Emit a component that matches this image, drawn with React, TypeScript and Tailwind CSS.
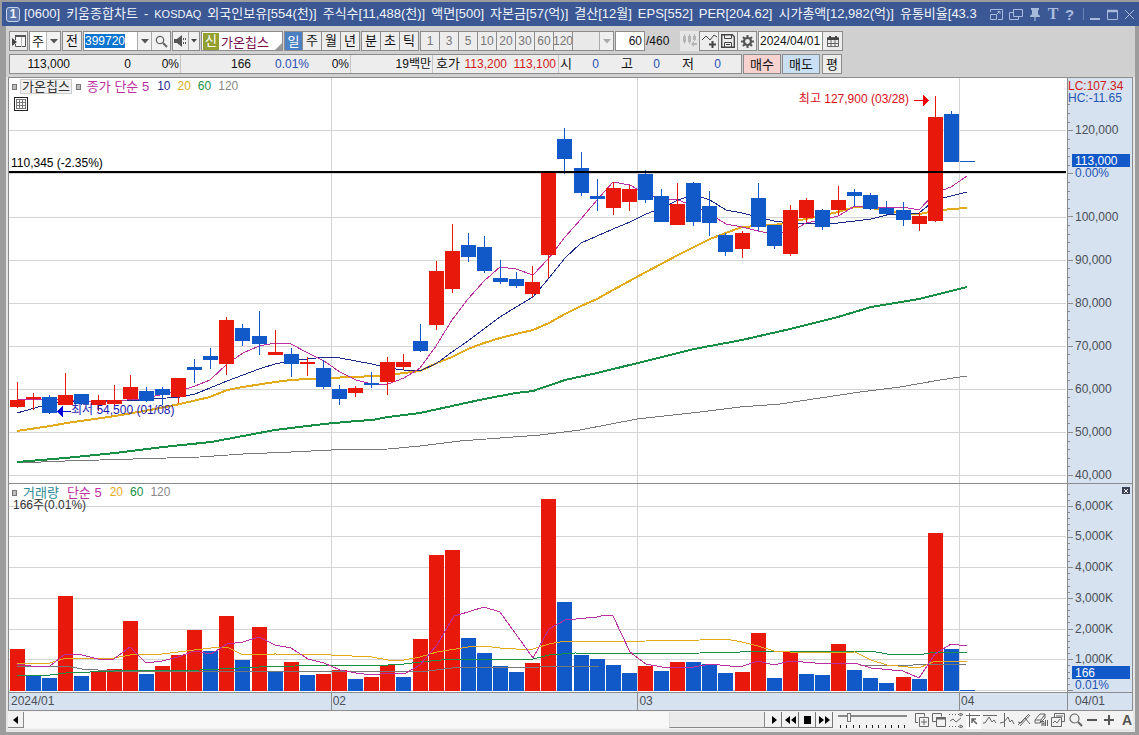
import React from 'react';

const RED = '#e8190a';
const BLUE = '#1158c8';

const titleParts = ['[0600]', '키움종합차트', '-', 'KOSDAQ', '외국인보유[554(천)]', '주식수[11,488(천)]', '액면[500]', '자본금[57(억)]', '결산[12월]', 'EPS[552]', 'PER[204.62]', '시가총액[12,982(억)]', '유통비율[43.3'];

// [color, body top, body bottom, high, low]
type Candle = [string, number, number, number, number];
const R = RED;
const B = BLUE;
const candles: Candle[] = [
  [R, 400, 407, 382, 408], [R, 397, 399, 393, 410], [B, 397, 413, 395, 414], [R, 395, 405, 373, 405],
  [B, 394, 404, 394, 405], [R, 400, 405, 395, 411], [R, 400, 404, 385, 406], [R, 387, 399, 375, 400],
  [B, 391, 401, 387, 402], [B, 389, 395, 387, 405], [R, 378, 397, 378, 403], [B, 367, 370, 359, 383],
  [B, 356, 360, 348, 369], [R, 320, 364, 317, 375], [B, 328, 341, 324, 346], [B, 336, 344, 311, 355],
  [R, 352, 355, 330, 355], [B, 354, 364, 348, 377], [R, 362, 364, 357, 376], [B, 368, 387, 360, 389],
  [B, 389, 399, 385, 405], [R, 388, 393, 386, 397], [B, 383, 385, 372, 388], [R, 362, 382, 357, 395],
  [R, 362, 367, 354, 370], [B, 341, 351, 324, 352], [R, 271, 325, 261, 330], [R, 251, 289, 224, 293],
  [B, 245, 257, 233, 262], [B, 247, 271, 236, 273], [B, 278, 282, 260, 284], [B, 279, 286, 272, 288],
  [R, 282, 294, 266, 297], [R, 172, 255, 172, 278], [B, 139, 159, 128, 174], [B, 168, 193, 152, 196],
  [B, 196, 199, 179, 211], [R, 188, 208, 182, 215], [R, 189, 202, 185, 211], [B, 174, 200, 170, 203],
  [B, 196, 222, 189, 222], [R, 204, 225, 183, 225], [B, 183, 222, 182, 226], [B, 206, 223, 191, 236],
  [B, 235, 252, 233, 256], [R, 233, 249, 231, 258], [B, 198, 227, 183, 231], [B, 225, 246, 225, 249],
  [R, 210, 254, 205, 256], [R, 200, 218, 198, 222], [B, 210, 227, 209, 230], [R, 200, 210, 186, 215],
  [B, 192, 196, 189, 206], [B, 195, 209, 193, 210], [B, 208, 214, 201, 215], [B, 210, 220, 202, 226],
  [R, 216, 224, 212, 231], [R, 117, 221, 96, 222], [B, 114, 162, 111, 162], [B, 161, 162, 161, 162],
];

const volumes: [string, number][] = [
  [R, 649], [B, 676], [B, 678], [R, 596], [B, 676], [R, 672], [R, 669], [R, 621], [B, 674], [R, 666],
  [R, 655], [R, 630], [B, 651], [R, 616], [B, 660], [R, 627], [B, 671], [R, 662], [B, 675], [R, 674],
  [R, 670], [B, 679], [R, 677], [R, 665], [B, 677], [R, 639], [R, 555], [R, 550], [B, 638], [B, 653],
  [B, 666], [B, 672], [R, 663], [R, 499], [B, 602], [B, 655], [B, 659], [B, 665], [B, 673], [R, 666],
  [B, 671], [R, 662], [B, 662], [B, 664], [B, 673], [R, 672], [R, 633], [B, 678], [R, 652], [B, 674],
  [B, 675], [R, 644], [B, 670], [B, 678], [B, 683], [R, 677], [B, 679], [R, 533], [B, 649], [B, 690],
];

const barX = (i: number) => Math.round(10 + i * 16.1);

const priceLines = [
  { color: '#777777', width: 1, points: '17,463 65,461 100,460 200,457 243,454 291,452 331,450 388,449 420,446 460,441 500,438 540,435 580,430 637,419 700,412 740,407 780,404 820,398 860,392 900,387 940,380 967,376' },
  { color: '#178f45', width: 2, points: '17,462 65,458 115,453 163,447 211,442 243,436 275,430 291,428 324,424 356,421 372,420 388,417 420,413 452,406 484,399 516,393 533,391 565,380 597,373 646,361 694,349 742,340 790,329 838,317 871,307 919,299 967,287' },
  { color: '#e3aa1c', width: 2, points: '17,431 50,426 67,423 115,416 150,410 180,404 210,397 227,390 243,387 275,382 291,380 324,378 356,377 388,375 404,373 420,371 437,363 452,357 468,349 484,343 500,338 516,334 533,330 549,323 565,314 581,306 597,299 613,290 646,272 678,255 710,239 742,227 774,225 806,219 838,212 855,207 871,208 887,211 903,213 919,214 935,211 951,209 967,208' },
  { color: '#1a2a8c', width: 1, points: '17,413 42,406 60,402 100,401 140,400 180,397 195,394 210,388 227,381 243,375 259,369 275,364 291,361 308,359 324,357 340,358 356,361 372,364 388,368 404,370 420,371 437,363 452,352 468,341 484,329 500,317 516,307 533,297 549,278 565,258 581,243 597,236 613,229 630,222 646,214 662,208 678,200 694,195 710,200 726,210 742,213 758,217 774,221 790,223 822,223 838,223 855,221 871,219 887,215 903,214 919,213 935,200 951,196 967,192' },
  { color: '#bb2fa0', width: 1, points: '17,399 42,399 58,400 100,402 140,399 180,391 195,386 210,380 227,364 243,353 259,346 275,343 291,344 308,353 324,361 340,372 356,380 372,384 388,384 404,378 420,368 436,346 452,320 468,299 484,281 500,267 516,269 533,275 549,258 565,237 581,219 597,200 613,182 630,185 646,194 662,199 678,200 694,206 710,214 726,224 742,227 758,231 774,234 790,232 806,223 822,220 838,216 855,206 871,207 903,207 919,210 935,193 951,187 967,176' },
];

const volumeLines = [
  { color: '#777777', points: '17,666 66,666 82,669 114,671 340,671 420,672 452,668 540,667 600,666 860,666 967,664' },
  { color: '#178f45', points: '17,675 50,675 66,673 114,671 200,670 259,667 331,665 388,665 404,664 420,662 452,659 533,659 549,655 575,653 620,654 700,653 780,651 871,651 887,654 919,655 935,652 967,652' },
  { color: '#e3aa1c', points: '17,663 50,663 66,658 114,658 130,655 162,654 178,652 211,648 227,647 243,655 275,654 331,655 372,657 388,660 404,660 420,657 437,652 468,647 484,646 500,648 516,649 533,649 549,644 565,641 590,642 646,641 700,640 726,639 742,642 758,646 774,651 790,652 815,653 855,652 871,660 887,665 919,668 935,661 967,661' },
  { color: '#bb2fa0', points: '17,664 31,666 50,666 65,654 82,655 98,659 114,659 130,647 146,663 162,661 178,657 194,651 211,654 227,644 243,642 259,637 275,645 291,648 308,659 324,663 340,670 356,673 372,675 388,673 404,674 420,665 437,645 454,616 468,612 484,607 500,612 533,658 549,629 565,620 597,617 605,615 613,616 630,652 646,664 662,667 694,667 710,664 740,667 758,661 774,665 790,661 815,663 838,664 855,663 871,668 903,671 919,678 935,654 951,644 967,646' },
];

const priceLabels: [number, string][] = [[130, '120,000'], [217, '100,000'], [260, '90,000'], [303, '80,000'], [346, '70,000'], [389, '60,000'], [432, '50,000'], [475, '40,000']];
const volumeLabels: [number, string][] = [[506, '6,000K'], [536, '5,000K'], [567, '4,000K'], [598, '3,000K'], [629, '2,000K'], [659, '1,000K']];

const btn = 'flex items-center justify-center border border-[#8c8c8c] bg-[#ededed] h-5';

const Caret = ({ color = '#555' }: { color?: string }) => (
  <svg width="8" height="5" viewBox="0 0 8 5" className="pointer-events-none shrink-0"><path d="M0 0h8L4 4.5z" fill={color} /></svg>
);

const TitleBar = () => (
  <header className="ml-[2px] flex h-6 items-center bg-[#3b5894] pl-1 text-[13px] text-[#f0f4fb]">
    <span className="mr-1 flex h-[15px] w-[14px] items-center justify-center rounded-[3px] border border-[#c8d4ea] bg-[#5a76ac] text-[12px] font-bold leading-none">1</span>
    <h1 className="flex min-w-0 flex-1 items-baseline gap-[6px] overflow-hidden whitespace-nowrap">
      {titleParts.map((part) => (
        <span key={part} className={part === 'KOSDAQ' ? 'text-[11px]' : ''}>{part}</span>
      ))}
    </h1>
    <div className="flex items-center gap-[6px] pr-1 text-[#a9bbdc]">
      <button aria-label="화면 분할"><svg width="13" height="13" viewBox="0 0 13 13" fill="none" stroke="currentColor"><path d="M.5 4V1.500h12v10H8" /><path d="M.5 6.500h6v5h-6z" /><path d="M7 6l3-3M7.500 3.500h2.500v2.500" /></svg></button>
      <button aria-label="새 창"><svg width="14" height="13" viewBox="0 0 14 13" fill="none" stroke="currentColor"><path d="M4.500 1.500h9v7h-9z" /><path d="M4 4.500H.5v7h9V9" /></svg></button>
      <button aria-label="고정"><svg width="12" height="13" viewBox="0 0 12 13" fill="currentColor"><path d="M2 0h8v2H9v4l2 2v1H6.600v4H5.400V9H1V8l2-2V2H2z" /></svg></button>
      <button className="w-3 font-[Liberation_Serif,serif] text-[16px] font-bold leading-none">T</button>
      <button className="w-2 text-[15px] font-bold leading-none">?</button>
      <span className="ml-1 h-3 w-px bg-[#6b84b4]" />
      <button aria-label="최소화"><svg width="11" height="13" viewBox="0 0 11 13"><path d="M0 10h10v2H0z" fill="currentColor" /></svg></button>
      <button aria-label="최대화"><svg width="11" height="11" viewBox="0 0 11 11" fill="none" stroke="currentColor"><path d="M.5 1.500h10v9H.5z" /><path d="M0 2h11" strokeWidth="2.500" /></svg></button>
      <button aria-label="닫기"><svg width="11" height="11" viewBox="0 0 11 11" stroke="currentColor"><path d="M1 1l9 9M10 1l-9 9" /></svg></button>
    </div>
  </header>
);

const Toolbar = () => (
  <div className="flex h-5 items-center gap-px text-[13px] text-[#111]">
    <button className={`${btn} w-[19px]`} aria-label="종목창">
      <svg width="14" height="12" viewBox="0 0 14 12"><path d="M3.500 5V.5h10v11h-10V9" fill="#f8f8f8" stroke="#555" /><path d="M3 0h11v2H3z" fill="#555" /><path d="M9.500 2v10" stroke="#bbb" /><path d="M0 3l5 4-5 4z" fill="#444" /></svg>
    </button>
    <label className="relative flex h-5 w-8 items-center border border-[#8c8c8c] bg-white">
      <select aria-label="시장" className="h-full w-full appearance-none pl-[2px] text-[13px] outline-none"><option>주</option></select>
      <span className="pointer-events-none absolute inset-y-0 right-0 flex w-[14px] items-center justify-center border-l border-[#bbb] bg-[#f2f2f2]"><Caret /></span>
    </label>
    <button className={`${btn} w-5`}>전</button>
    <div className="flex h-5 items-center border border-[#8c8c8c] bg-white">
      <div className="w-[53px] pl-px"><input aria-label="종목코드" defaultValue="399720" className="block h-[14px] w-[40px] bg-[#0d74cf] text-[12px] leading-none text-white outline-none" /></div>
      <button aria-label="최근 종목" className="flex h-full w-[14px] items-center justify-center border-l border-[#aaa] bg-[#f2f2f2]"><Caret /></button>
      <button aria-label="종목 검색" className="flex h-full w-[19px] items-center justify-center border-l border-[#aaa] bg-[#f2f2f2]">
        <svg width="13" height="13" viewBox="0 0 13 13" fill="none" stroke="#666"><circle cx="5" cy="5" r="3.700" strokeWidth="1.300" /><path d="M8 8l4 4" strokeWidth="2" /></svg>
      </button>
    </div>
    <div className="flex h-5 border border-[#8c8c8c] bg-[#f0f0f0]">
      <button aria-label="소리" className="flex w-[15px] items-center justify-center"><svg width="13" height="12" viewBox="0 0 13 12" fill="#555"><path d="M0 4h3l5-4v12L3 8H0zM9 3h1v2H9zM9 7h1v2H9zM11 3h1v2h-1zM11 7h1v2h-1z" /></svg></button>
      <button aria-label="소리 설정" className="flex w-[11px] items-center justify-center border-l border-[#aaa]"><svg width="6" height="4" viewBox="0 0 6 4"><path d="M0 0h6L3 3.500z" fill="#444" /></svg></button>
    </div>
    <div className="relative flex h-5 w-[82px] items-center border border-[#8c8c8c] bg-white">
      <span className="ml-px flex h-[17px] w-4 items-center justify-center bg-[#93a02f] text-white">신</span>
      <input aria-label="종목명" readOnly value="가온칩스" className="h-full w-[56px] pl-[2px] text-[13px] text-[#7a1050] outline-none" />
      <svg width="7" height="7" viewBox="0 0 7 7" className="absolute bottom-0 right-0"><path d="M7 0v7H0z" fill="#999" /></svg>
    </div>
    <div className="flex">
      <button className="h-5 w-[19px] border border-[#8c8c8c] bg-[#4b80c3] text-center leading-none text-white">일</button>
      {['주', '월', '년'].map((t) => <button key={t} className={`${btn} w-[19px] border-l-0`}>{t}</button>)}
    </div>
    <div className="flex">
      {['분', '초', '틱'].map((t) => <button key={t} className={`${btn} -mr-px w-5`}>{t}</button>)}
    </div>
    <div className="ml-px flex text-[12px] text-[#777]">
      {['1', '3', '5', '10', '20', '30', '60', '120'].map((t) => <button key={t} className={`${btn} -mr-px w-5`}>{t}</button>)}
      <label className="relative block h-5 w-[42px] border border-[#8c8c8c]">
        <select aria-label="주기" disabled className="block h-full w-full appearance-none bg-[#e9e9e9]" />
        <span className="pointer-events-none absolute inset-y-0 right-0 flex w-[14px] items-center justify-center border-l border-[#aaa] bg-[#efefef]"><Caret color="#aaa" /></span>
      </label>
    </div>
    <label className="flex items-center text-[12px]">
      <input aria-label="봉 개수" defaultValue="60" className="h-5 w-[30px] border border-[#8c8c8c] bg-white pr-[2px] text-right outline-none" />
      <span className="w-[34px] pl-px">/460</span>
    </label>
    <div className="flex">
      <button aria-label="봉 추가" className="flex h-5 w-[19px] items-center justify-center bg-[#e6e6e6]">
        <svg width="16" height="14" viewBox="0 0 16 14" fill="#b5b5b5"><path d="M1 2h3v6H1zM2 0h1v10H2zM6 2h3v6H6zM7 0h1v10H7zM11 2h3v4h-3zM12 0h1v7h-1zM9 10l3-3v2h3v2h-3v2z" /></svg>
      </button>
      <button aria-label="지표 추가" className={`${btn} -mr-px w-5`}>
        <svg width="17" height="15" viewBox="0 0 17 15" fill="none" stroke="#444"><path d="M1 6l4-4 4 4 4-5 3 2" /><path d="M11.500 7v7M8 10.500h7" strokeWidth="2" /></svg>
      </button>
      <button aria-label="저장" className={`${btn} -mr-px w-5`}>
        <svg width="14" height="14" viewBox="0 0 14 14" fill="none" stroke="#444"><path d="M.7.7h10.600l2 2v10.600H.7z" strokeWidth="1.400" /><path d="M3.500.5v4h7v-4M3.500 13.500v-5h7v5M5 10.500h4" /></svg>
      </button>
      <button aria-label="설정" className={`${btn} w-5`}>
        <svg width="13" height="13" viewBox="0 0 13 13"><circle cx="6.500" cy="6.500" r="3.500" fill="none" stroke="#555" strokeWidth="2.200" /><path d="M6.500 0v3M6.500 10v3M0 6.500h3M10 6.500h3M2 2l2 2M9 9l2 2M11 2L9 4M4 9l-2 2" stroke="#555" strokeWidth="2" /></svg>
      </button>
    </div>
    <div className="flex">
      <input aria-label="기준일" defaultValue="2024/04/01" className="h-5 w-[65px] border border-[#8c8c8c] bg-white pl-px text-[12px] outline-none" />
      <button aria-label="달력" className={`${btn} w-5 border-l-0`}>
        <svg width="12" height="11" viewBox="0 0 12 11" fill="none" stroke="#666"><path d="M.5 1.500h11v9H.5zM.5 7.500h11M4 4v7M8 4v7" /><path d="M0 3h12M3 0v2M9 0v2" stroke="#444" strokeWidth="2" /></svg>
      </button>
    </div>
  </div>
);

const QuoteBar = () => (
  <div className="flex gap-px text-[12px] text-[#111]">
    <div className="flex h-5 w-[733px] items-center border border-[#8c8c8c] bg-[#ededed] text-right">
      <span className="w-[60px]">113,000</span>
      <span className="w-[61px]">0</span>
      <span className="h-full w-[50px] border-r border-[#c4c4c4] pr-px">0%</span>
      <span className="w-[70px]">166</span>
      <span className="w-[58px] text-[#2a4fb4]">0.01%</span>
      <span className="h-full w-[42px] border-r border-[#c4c4c4] pr-px">0%</span>
      <span className="h-full w-[82px] border-r border-[#c4c4c4] pr-px">19백만</span>
      <span className="w-[27px] text-[13px]">호가</span>
      <span className="w-[47px] text-[#d01c1c]">113,200</span>
      <span className="h-full w-[52px] border-r border-[#c4c4c4] pr-[2px] text-[#d01c1c]">113,100</span>
      <span className="w-[13px] text-[13px]">시</span>
      <span className="w-[27px] text-[#2a4fb4]">0</span>
      <span className="w-[34px] text-[13px]">고</span>
      <span className="w-[27px] text-[#2a4fb4]">0</span>
      <span className="w-[34px] text-[13px]">저</span>
      <span className="w-[27px] text-[#2a4fb4]">0</span>
    </div>
    <button className="h-5 w-[38px] border border-[#8c8c8c] bg-[#f8d2cf] text-[13px] leading-none">매수</button>
    <button className="h-5 w-[38px] border border-[#8c8c8c] bg-[#c9dff3] text-[13px] leading-none">매도</button>
    <button className="ml-px h-5 w-5 border border-[#8c8c8c] bg-[#ededed] text-[13px] leading-none">평</button>
  </div>
);

const Marker = () => <span className="h-[6px] w-[5px] border border-[#777] bg-[#bbb]" />;

const PricePane = () => (
  <section className="flex border-b border-[#8c8c8c]">
    <div className="relative min-w-0 flex-1 bg-white">
      <svg viewBox="9 78 1058 405" preserveAspectRatio="none" className="block h-[405px] w-full" shapeRendering="crispEdges">
        {[130, 173, 217, 260, 303, 346, 389, 432, 475].map((y) => <rect key={y} x="9" y={y} width="1057" height="1" fill="#d4d4d4" />)}
        {[331, 637, 959].map((x) => <rect key={x} x={x} y="78" width="1" height="405" fill="#d4d4d4" />)}
        {priceLines.map((l) => <polyline key={l.color} points={l.points} fill="none" stroke={l.color} strokeWidth={l.width} />)}
        {candles.map(([color, top, bottom, high, low], i) => (
          <g key={i} fill={color}>
            <rect x={barX(i) + 7} y={high} width="1" height={low - high} />
            <rect x={barX(i)} y={top} width="15" height={bottom - top} />
          </g>
        ))}
        <rect x="9" y="171" width="1057" height="2" fill="#000" />
        <path d="M914 100h9v-5l6 5.500-6 5.500v-5h-9z" fill="#f00000" />
        <path d="M71 411h-8v-5l-6 5.500 6 5.500v-5h8z" fill="#0000d8" />
      </svg>
      <div className="absolute left-[3px] top-[1px] flex items-center text-[12px] leading-[15px]">
        <Marker />
        <button className="ml-[3px] border border-[#ccc] bg-[#f1f1f1] px-px text-[13px] leading-[13px] text-[#333]">가온칩스</button>
        <span className="ml-1 flex"><Marker /></span>
        <span className="ml-[6px] text-[13px] text-[#bb2fa0]">종가 단순 5</span>
        <span className="ml-2 text-[#1a2a8c]">10</span>
        <span className="ml-[7px] text-[#d9ab20]">20</span>
        <span className="ml-[7px] text-[#178f45]">60</span>
        <span className="ml-[7px] text-[#888]">120</span>
      </div>
      <button aria-label="데이터 표" className="absolute left-[5px] top-[19px] flex h-[14px] w-[14px] items-center justify-center border border-[#222] bg-white">
        <svg width="10" height="10" viewBox="0 0 10 10" fill="none" stroke="#777" shapeRendering="crispEdges"><path d="M.5.5h9v9h-9zM0 3.500h10M0 6.500h10M3.500 0v10M6.500 0v10" /></svg>
      </button>
      <span className="absolute left-[2px] top-[78px] text-[12px] leading-[15px] text-black">110,345 (-2.35%)</span>
      <span className="absolute left-[62px] top-[325px] text-[12px] leading-[15px] text-[#1a1ab0]">최저 54,500 (01/08)</span>
      <span className="absolute right-[158px] top-[14px] text-[12px] leading-[15px] text-[#d8101c]">최고 127,900 (03/28)</span>
    </div>
    <svg viewBox="1067 78 65 405" className="block h-[405px] w-[65px] shrink-0 bg-[#d6e2ef]" fontSize="12" fill="#4a4f57" shapeRendering="crispEdges">
      <rect x="1067" y="78" width="1" height="405" fill="#8c8c8c" />
      {Array.from({ length: 44 }, (_, i) => <rect key={i} x="1068" y={Math.round(104.4 + i * 8.62)} width={i % 5 === 3 ? 5 : 2} height="1" fill="#8c8c8c" />)}
      {priceLabels.map(([y, t]) => <text key={t} x="1075" y={y + 4}>{t}</text>)}
      <text x="1068" y="90" fill="#d01c1c">LC:107.34</text>
      <text x="1068" y="102" fill="#1f55b5">HC:-11.65</text>
      <text x="1075" y="177" fill="#1f55b5">0.00%</text>
      <rect x="1072" y="154" width="58" height="13" fill={BLUE} />
      <text x="1075" y="165" fill="#fff">113,000</text>
    </svg>
  </section>
);

const VolumePane = () => (
  <section className="flex border-b border-[#8c8c8c]">
    <div className="relative min-w-0 flex-1 bg-white">
      <svg viewBox="9 484 1058 208" preserveAspectRatio="none" className="block h-[208px] w-full" shapeRendering="crispEdges">
        {[506, 536, 567, 598, 629, 659, 690].map((y) => <rect key={y} x="9" y={y} width="1057" height="1" fill="#d4d4d4" />)}
        {[331, 637, 959].map((x) => <rect key={x} x={x} y="484" width="1" height="208" fill="#d4d4d4" />)}
        {volumes.map(([color, top], i) => <rect key={i} x={barX(i)} y={top} width="15" height={691 - top} fill={color} />)}
        {volumeLines.map((l) => <polyline key={l.color} points={l.points} fill="none" stroke={l.color} />)}
      </svg>
      <div className="absolute left-[3px] top-[1px] flex items-center text-[12px] leading-[15px]">
        <Marker />
        <span className="ml-[6px] text-[13px] text-[#2a8a96]">거래량</span>
        <span className="ml-2 text-[13px] text-[#bb2fa0]">단순 5</span>
        <span className="ml-2 text-[#e3aa1c]">20</span>
        <span className="ml-[7px] text-[#178f45]">60</span>
        <span className="ml-[7px] text-[#888]">120</span>
      </div>
      <span className="absolute left-[4px] top-[14px] text-[12px] leading-[15px] text-[#333]">166주(0.01%)</span>
    </div>
    <div className="relative shrink-0">
      <svg viewBox="1067 484 65 208" className="block h-[208px] w-[65px] bg-[#d6e2ef]" fontSize="12" fill="#4a4f57" shapeRendering="crispEdges">
        <rect x="1067" y="484" width="1" height="208" fill="#8c8c8c" />
        {Array.from({ length: 33 }, (_, i) => <rect key={i} x="1068" y={Math.round(690 - i * 6.14)} width={i % 5 === 0 ? 5 : 2} height="1" fill="#8c8c8c" />)}
        {volumeLabels.map(([y, t]) => <text key={t} x="1075" y={y + 4}>{t}</text>)}
        <rect x="1072" y="666" width="58" height="13" fill={BLUE} />
        <text x="1075" y="677" fill="#fff">166</text>
        <text x="1075" y="689" fill="#1f55b5">0.01%</text>
      </svg>
      <button aria-label="지표 닫기" className="absolute right-[2px] top-[3px] flex h-[7px] w-2 items-center justify-center bg-[#3a3f55]">
        <svg width="4" height="4" viewBox="0 0 4 4" stroke="#fff"><path d="M0 0l4 4M4 0L0 4" /></svg>
      </button>
    </div>
  </section>
);

const DateAxis = () => (
  <div className="flex h-[18px] border-b border-[#8c8c8c] bg-[#d6e2ef] text-[12px] leading-4 text-[#4a4f57]">
    <div className="flex min-w-0 flex-1">
      <span className="w-[30.4%] pl-[2px]">2024/01</span>
      <span className="w-[29%] border-l border-[#8c8c8c] pl-px">02</span>
      <span className="w-[30.4%] border-l border-[#8c8c8c] pl-px">03</span>
      <span className="border-l border-[#8c8c8c] pl-px">04</span>
    </div>
    <span className="w-[65px] shrink-0 border-l border-[#8c8c8c] pl-[7px]">04/01</span>
  </div>
);

const playback: [string, string][] = [
  ['재생', 'M5 2v8l5-4z'],
  ['뒤로', 'M6 2v8L1 6zM12 2v8L7 6z'],
  ['정지', 'M3 2h7v8H3z'],
  ['앞으로', 'M1 2v8l5-4zM7 2v8l5-4z'],
];

const chartTools: [string, React.ReactNode][] = [
  ['창 추가', <path d="M3 9.500H.5v-9h9v3M4.500 4.500h9v9h-9zM9 6v6M6 9h6" />],
  ['창 겹치기', <><path d="M4 8.500H.5v-8h9v3M4.500 4.500h9v9h-9z" /><path d="M4 5.500h10" strokeWidth="2" /></>],
  ['구간', <><path d="M0 1.500h12M0 13.500h12" strokeDasharray="1 2" /><path d="M1 8l3-2 3 3 5-4M11 0l3 1.500L11 3zM11 12l3 1.500-3 1.500z" /></>],
  ['십자선', <><path d="M0 2.500h14M3.500 0v14" /><path d="M11 11L6 6M6 10V6h4" strokeWidth="1.500" /></>],
  ['추세선', <path d="M0 2.500h14M0 10h2l4-6 3 5 2-2 2 3" />],
  ['수직선', <path d="M4.500 0v14M0 10l4-1 4-5 2 5 2-2 2 4" />],
  ['사선', <path d="M1 12L12 1M3 13L13 2M1 9l3 1 4-5 5 6" />],
  ['전체 지우기', <><path d="M1 7l5-6h5L7 7zM1 7v3h5l1-3M6 10l5-5V1" /><path d="M8 13V9l1-1 1 1v4M8 11h2M11.500 7v6M13.500 7v6" /></>],
  ['차트 복사', <path d="M3.500 4V.5h10v8H11M.5 4.500h10v9H.5zM2 10l2-2 2 2 3-4M5 3h7" />],
];

const BottomBar = () => (
  <footer className="flex h-[18px] items-center bg-[#f2f2f2] text-[#777]">
    <button aria-label="왼쪽으로" className="flex h-4 w-4 items-center justify-center border-b border-r border-[#888] bg-[#f2f2f2]"><svg width="6" height="8" viewBox="0 0 6 8"><path d="M5 0v8L0 4z" fill="#000" /></svg></button>
    <div className="flex h-4 min-w-0 flex-1 justify-end bg-[#f8f8f8]">
      <div className="w-24 border-b border-r border-l border-[#888] border-l-[#ddd] bg-[#ebebeb]" />
    </div>
    {playback.map(([label, d]) => (
      <button key={label} aria-label={label} className="flex h-4 w-[17px] items-center justify-center border-b border-r border-[#777] bg-[#f2f2f2]">
        <svg width="13" height="12" viewBox="0 0 13 12"><path d={d} fill="#000" /></svg>
      </button>
    ))}
    <div className="ml-[5px] mr-2 flex w-[69px] flex-col gap-[3px]">
      <input type="range" aria-label="속도" defaultValue={14} className="h-[10px] w-full appearance-none bg-[linear-gradient(#888,#888)] bg-[length:100%_2px] bg-[position:0_3px] bg-no-repeat [&::-webkit-slider-thumb]:h-[9px] [&::-webkit-slider-thumb]:w-1 [&::-webkit-slider-thumb]:appearance-none [&::-webkit-slider-thumb]:border [&::-webkit-slider-thumb]:border-[#777] [&::-webkit-slider-thumb]:bg-[#f2f2f2]" />
      <div className="flex justify-between px-[2px]">
        {Array.from({ length: 11 }, (_, i) => <span key={i} className="h-[3px] w-px bg-[#222]" />)}
      </div>
    </div>
    <div className="flex items-center gap-[2px]">
      {chartTools.map(([label, icon], i) => (
        <button key={label} aria-label={label} className={`flex h-[17px] w-[15px] items-center justify-center ${i === 3 ? 'bg-white' : ''}`}>
          <svg width="15" height="15" viewBox="0 0 15 15" fill="none" stroke="#666">{icon}</svg>
        </button>
      ))}
      <button aria-label="돋보기" className="ml-px"><svg width="14" height="14" viewBox="0 0 14 14" fill="none" stroke="#666"><circle cx="5.500" cy="5.500" r="4.500" strokeWidth="1.200" /><path d="M9 9l4 4" strokeWidth="2.200" /></svg></button>
      <button aria-label="축소" className="ml-[2px]"><svg width="11" height="12" viewBox="0 0 11 12"><path d="M0 5h10v2H0z" fill="#555" /></svg></button>
      <button aria-label="확대" className="ml-1"><svg width="11" height="12" viewBox="0 0 11 12"><path d="M0 5h10v2H0zM4 1h2v10H4z" fill="#555" /></svg></button>
      <button className="ml-1 w-3 text-[14px] font-bold leading-none text-[#555]">A</button>
    </div>
  </footer>
);

export default function App() {
  return (
    <div className="bg-[#9c9c9c] pb-1 pt-[2px] font-['Liberation_Sans','Noto_Sans_CJK_KR',sans-serif]">
      <TitleBar />
      <main className="ml-[6px] mr-1 bg-[#e6e6e6] pb-[3px]">
        <div className="flex flex-col gap-[3px] bg-[#d0d0d0] pb-[3px] pl-[3px] pt-[5px]">
          <Toolbar />
          <QuoteBar />
        </div>
        <div className="mx-[2px]">
          <div className="border-x border-t border-[#8c8c8c]">
            <PricePane />
            <VolumePane />
            <DateAxis />
          </div>
          <BottomBar />
        </div>
      </main>
    </div>
  );
}
